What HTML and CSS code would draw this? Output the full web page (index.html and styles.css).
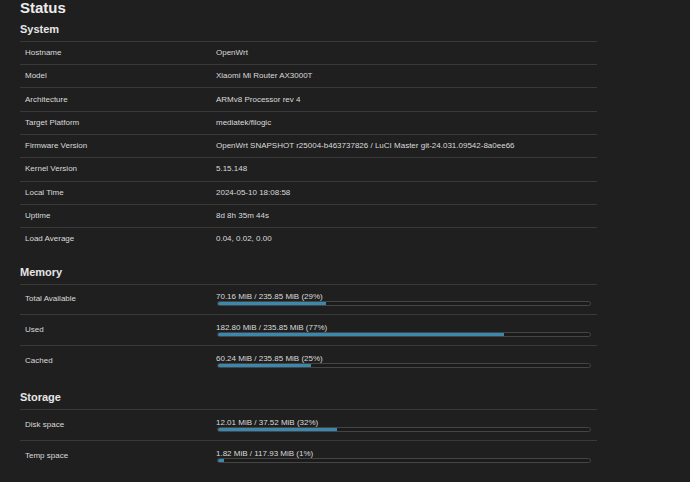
FILE: index.html
```html
<!DOCTYPE html>
<html>
<head>
<meta charset="utf-8">
<title>Status</title>
<link rel="stylesheet" href="styles.css">
</head>
<body>
<div class="page">
  <h2 class="title">Status</h2>

  <h3 class="section-title sys">System</h3>
  <div class="table">
    <div class="row"><div class="key">Hostname</div><div class="val">OpenWrt</div></div>
    <div class="row"><div class="key">Model</div><div class="val">Xiaomi Mi Router AX3000T</div></div>
    <div class="row"><div class="key">Architecture</div><div class="val">ARMv8 Processor rev 4</div></div>
    <div class="row"><div class="key">Target Platform</div><div class="val">mediatek/filogic</div></div>
    <div class="row"><div class="key">Firmware Version</div><div class="val">OpenWrt SNAPSHOT r25004-b463737826 / LuCI Master git-24.031.09542-8a0ee66</div></div>
    <div class="row"><div class="key">Kernel Version</div><div class="val">5.15.148</div></div>
    <div class="row"><div class="key">Local Time</div><div class="val">2024-05-10 18:08:58</div></div>
    <div class="row"><div class="key">Uptime</div><div class="val">8d 8h 35m 44s</div></div>
    <div class="row"><div class="key">Load Average</div><div class="val">0.04, 0.02, 0.00</div></div>
  </div>

  <h3 class="section-title mem">Memory</h3>
  <div class="table">
    <div class="row tall"><div class="key">Total Available</div><div class="val"><div class="bar-label">70.16 MiB / 235.85 MiB (29%)</div><div class="bar"><div class="fill" style="width:29%"></div></div></div></div>
    <div class="row tall"><div class="key">Used</div><div class="val"><div class="bar-label">182.80 MiB / 235.85 MiB (77%)</div><div class="bar"><div class="fill" style="width:77%"></div></div></div></div>
    <div class="row tall"><div class="key">Cached</div><div class="val"><div class="bar-label">60.24 MiB / 235.85 MiB (25%)</div><div class="bar"><div class="fill" style="width:25%"></div></div></div></div>
  </div>

  <h3 class="section-title stor">Storage</h3>
  <div class="table">
    <div class="row tall"><div class="key">Disk space</div><div class="val"><div class="bar-label">12.01 MiB / 37.52 MiB (32%)</div><div class="bar"><div class="fill" style="width:32%"></div></div></div></div>
    <div class="row tall"><div class="key">Temp space</div><div class="val"><div class="bar-label">1.82 MiB / 117.93 MiB (1%)</div><div class="bar"><div class="fill" style="width:1.5%"></div></div></div></div>
  </div>
</div>
</body>
</html>
```

FILE: styles.css
```css
html, body {
  margin: 0;
  padding: 0;
  background: #1f1f1f;
  color: #dadada;
  font-family: "Liberation Sans", Arial, Helvetica, sans-serif;
}

.page {
  padding: 0 0 0 20px;
  width: 577px;
}

.title {
  margin: 0;
  font-size: 15px;
  line-height: 15px;
  font-weight: bold;
  color: #ececec;
}

.section-title {
  margin: 0 0 5px 0;
  font-size: 11px;
  line-height: 13px;
  font-weight: bold;
  color: #e6e6e6;
}

.section-title.sys {
  margin-top: 7.7px;
}

.section-title.mem {
  margin-top: 15px;
}

.section-title.stor {
  margin-top: 15.5px;
}

.row {
  display: flex;
  align-items: center;
  height: 23.33px;
  box-sizing: border-box;
  border-top: 1px solid #393939;
  font-size: 8px;
  line-height: 10px;
}

.row.tall {
  height: 30.7px;
}

.key {
  width: 196px;
  padding-left: 5px;
  box-sizing: border-box;
  flex: none;
}

.val {
  flex: 1;
  padding-right: 6px;
}

.bar-label {
  line-height: 9px;
}

.bar {
  height: 5px;
  box-sizing: border-box;
  border: 1px solid #454545;
  border-radius: 3px;
  background: #1b1b1b;
  margin-left: 1px;
  overflow: hidden;
}

.fill {
  height: 100%;
  background: #3a88ad;
}
```
